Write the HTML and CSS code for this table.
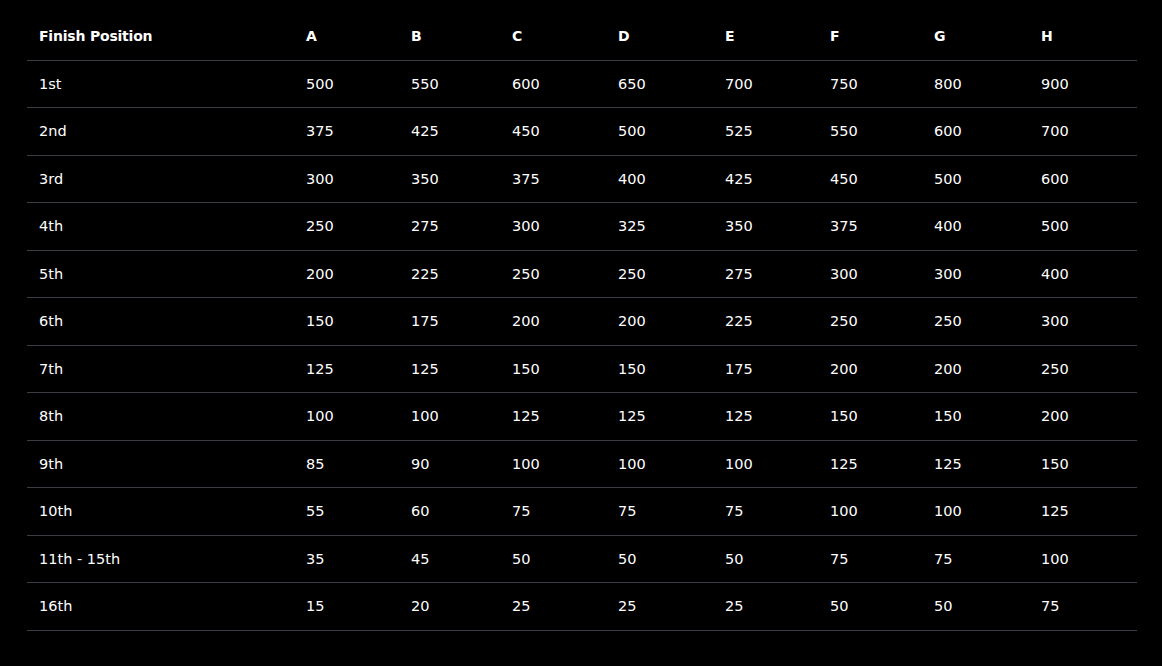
FILE: index.html
```html
<!DOCTYPE html>
<html lang="en">
<head>
<meta charset="utf-8">
<title>Finish Position Points</title>
<link rel="stylesheet" href="styles.css">
</head>
<body>
<div class="wrap">
<table class="points">
<colgroup>
<col class="c-pos"><col class="c-a"><col class="c-b"><col class="c-c"><col class="c-d"><col class="c-e"><col class="c-f"><col class="c-g"><col class="c-h">
</colgroup>
<thead>
<tr><th>Finish Position</th><th>A</th><th>B</th><th>C</th><th>D</th><th>E</th><th>F</th><th>G</th><th>H</th></tr>
</thead>
<tbody>
<tr><td>1st</td><td>500</td><td>550</td><td>600</td><td>650</td><td>700</td><td>750</td><td>800</td><td>900</td></tr>
<tr><td>2nd</td><td>375</td><td>425</td><td>450</td><td>500</td><td>525</td><td>550</td><td>600</td><td>700</td></tr>
<tr><td>3rd</td><td>300</td><td>350</td><td>375</td><td>400</td><td>425</td><td>450</td><td>500</td><td>600</td></tr>
<tr><td>4th</td><td>250</td><td>275</td><td>300</td><td>325</td><td>350</td><td>375</td><td>400</td><td>500</td></tr>
<tr><td>5th</td><td>200</td><td>225</td><td>250</td><td>250</td><td>275</td><td>300</td><td>300</td><td>400</td></tr>
<tr><td>6th</td><td>150</td><td>175</td><td>200</td><td>200</td><td>225</td><td>250</td><td>250</td><td>300</td></tr>
<tr><td>7th</td><td>125</td><td>125</td><td>150</td><td>150</td><td>175</td><td>200</td><td>200</td><td>250</td></tr>
<tr><td>8th</td><td>100</td><td>100</td><td>125</td><td>125</td><td>125</td><td>150</td><td>150</td><td>200</td></tr>
<tr><td>9th</td><td>85</td><td>90</td><td>100</td><td>100</td><td>100</td><td>125</td><td>125</td><td>150</td></tr>
<tr><td>10th</td><td>55</td><td>60</td><td>75</td><td>75</td><td>75</td><td>100</td><td>100</td><td>125</td></tr>
<tr><td>11th - 15th</td><td>35</td><td>45</td><td>50</td><td>50</td><td>50</td><td>75</td><td>75</td><td>100</td></tr>
<tr><td>16th</td><td>15</td><td>20</td><td>25</td><td>25</td><td>25</td><td>50</td><td>50</td><td>75</td></tr>
</tbody>
</table>
</div>
</body>
</html>
```

FILE: styles.css
```css
html, body {
  margin: 0;
  background: #000;
}
body {
  font-family: "DejaVu Sans", "Noto Sans", sans-serif;
  color: #fff;
}
.wrap {
  padding: 13px 25px 0 27px;
}
.points {
  width: 1110px;
  border-collapse: collapse;
  table-layout: fixed;
}
.c-pos { width: 267px; }
.c-a { width: 105px; }
.c-b { width: 101px; }
.c-c { width: 106px; }
.c-d { width: 107px; }
.c-e { width: 105px; }
.c-f { width: 104px; }
.c-g { width: 107px; }
.c-h { width: 108px; }
.points th,
.points td {
  text-align: left;
  padding: 12px 12px;
  font-size: 14.5px;
  line-height: 22.5px;
  border-bottom: 1px solid #3b3d42;
  white-space: nowrap;
}
.points th {
  font-weight: 700;
  font-size: 14px;
  letter-spacing: -0.2px;
}
.points td {
  font-weight: 400;
}
```
